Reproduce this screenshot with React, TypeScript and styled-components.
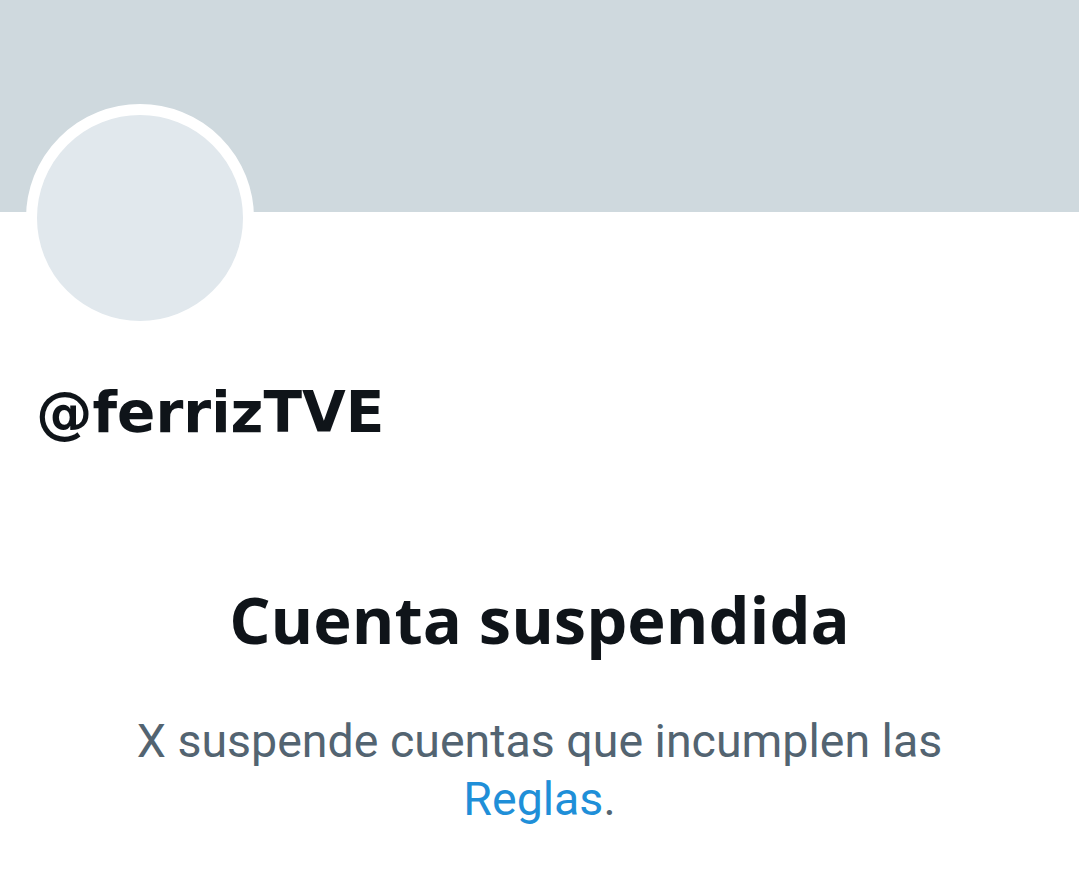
import React from "react";
import styled, { createGlobalStyle } from "styled-components";

const Global = createGlobalStyle`
  html, body { margin: 0; padding: 0; background: #ffffff; }
  body { font-family: Roboto, "Noto Sans", "Liberation Sans", sans-serif; }
`;

const Page = styled.div`
  width: 1079px;
  height: 883px;
  overflow: hidden;
  background: #ffffff;
  display: flex;
  flex-direction: column;
`;

const Banner = styled.div`
  height: 212px;
  background: #cfd9de;
  flex-shrink: 0;
`;

const Avatar = styled.div`
  margin: -108px 0 0 26px;
  width: 206px;
  height: 206px;
  border: 11px solid #ffffff;
  border-radius: 50%;
  background: #e1e8ed;
  flex-shrink: 0;
`;

const Handle = styled.div`
  margin: 49px 0 0 36px;
  font-family: "DejaVu Sans", "Open Sans", sans-serif;
  font-size: 56.5px;
  line-height: 64px;
  font-weight: 700;
  color: #0f1419;
`;

const Message = styled.div`
  margin-top: 136px;
  display: flex;
  flex-direction: column;
  align-items: center;
  text-align: center;
`;

const Title = styled.div`
  font-family: "Open Sans", Roboto, sans-serif;
  font-size: 65px;
  line-height: 76px;
  font-weight: 700;
  color: #0f1419;
`;

const Body = styled.div`
  margin-top: 55px;
  font-size: 46.5px;
  line-height: 58px;
  color: #536471;
  max-width: 830px;
`;

const Link = styled.span`
  color: #1f8fd8;
`;

export default function App() {
  return (
    <Page>
      <Global />
      <Banner />
      <Avatar />
      <Handle>@ferrizTVE</Handle>
      <Message>
        <Title>Cuenta suspendida</Title>
        <Body>
          X suspende cuentas que incumplen las <Link>Reglas</Link>.
        </Body>
      </Message>
    </Page>
  );
}
